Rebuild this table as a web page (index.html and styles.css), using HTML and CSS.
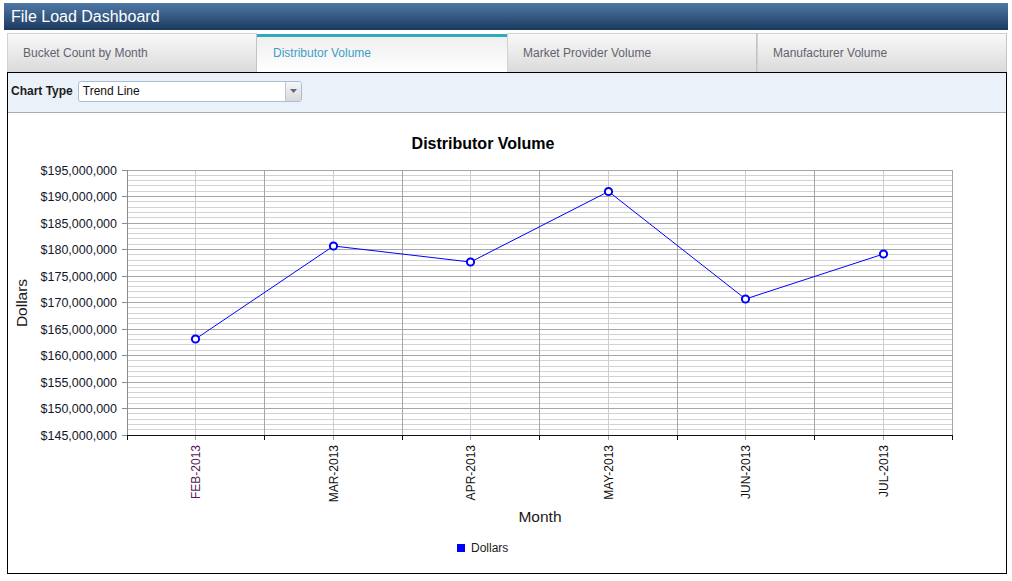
FILE: index.html
```html
<!DOCTYPE html>
<html>
<head>
<meta charset="utf-8">
<title>File Load Dashboard</title>
<link rel="stylesheet" href="styles.css">
</head>
<body>
<div class="header">File Load Dashboard</div>
<div class="main">
  <div class="tabs">
    <div class="tab">Bucket Count by Month</div>
    <div class="tab active">Distributor Volume</div>
    <div class="tab">Market Provider Volume</div>
    <div class="tab">Manufacturer Volume</div>
  </div>
  <div class="panel">
    <div class="toolbar">
      <span class="label">Chart Type</span>
      <div class="select">
        <span class="value">Trend Line</span>
        <span class="btn"><svg width="7" height="4" viewBox="0 0 7 4"><path d="M0 0H7L3.5 4Z" fill="#5b6b7d"/></svg></span>
      </div>
    </div>
    <div class="chart">
      <svg class="chart-svg" width="998" height="460" viewBox="8 113 998 460">
        <text class="title" x="483" y="149">Distributor Volume</text>
        <path class="minor" d="M127 175.5H952M127 180.5H952M127 185.5H952M127 191.5H952M127 201.5H952M127 207.5H952M127 212.5H952M127 217.5H952M127 228.5H952M127 233.5H952M127 238.5H952M127 244.5H952M127 254.5H952M127 260.5H952M127 265.5H952M127 270.5H952M127 281.5H952M127 286.5H952M127 291.5H952M127 297.5H952M127 307.5H952M127 313.5H952M127 318.5H952M127 323.5H952M127 334.5H952M127 339.5H952M127 344.5H952M127 350.5H952M127 360.5H952M127 366.5H952M127 371.5H952M127 376.5H952M127 387.5H952M127 392.5H952M127 397.5H952M127 403.5H952M127 413.5H952M127 419.5H952M127 424.5H952M127 429.5H952"/>
        <path class="vminor" d="M195.5 170V435M333.5 170V435M470.5 170V435M608.5 170V435M745.5 170V435M883.5 170V435"/>
        <path class="major" d="M127 170.5H952M127 196.5H952M127 223.5H952M127 249.5H952M127 276.5H952M127 302.5H952M127 329.5H952M127 355.5H952M127 382.5H952M127 408.5H952"/>
        <path class="major" d="M264.5 170V435M402.5 170V435M539.5 170V435M677.5 170V435M814.5 170V435M952.5 170V435"/>
        <path class="yaxis" d="M127.5 170V436M122 170.5H127M122 196.5H127M122 223.5H127M122 249.5H127M122 276.5H127M122 302.5H127M122 329.5H127M122 355.5H127M122 382.5H127M122 408.5H127M122 435.5H127"/>
        <path class="xticks-minor" d="M195.5 436V440M333.5 436V440M470.5 436V440M608.5 436V440M745.5 436V440M883.5 436V440"/>
        <path class="xaxis" d="M127 435.5H953M127.5 435V440M264.5 435V440M402.5 435V440M539.5 435V440M677.5 435V440M814.5 435V440M952.5 435V440"/>
        <g class="ylabels">
          <text x="117" y="174.5">$195,000,000</text>
          <text x="117" y="201">$190,000,000</text>
          <text x="117" y="227.5">$185,000,000</text>
          <text x="117" y="254">$180,000,000</text>
          <text x="117" y="280.5">$175,000,000</text>
          <text x="117" y="307">$170,000,000</text>
          <text x="117" y="333.5">$165,000,000</text>
          <text x="117" y="360">$160,000,000</text>
          <text x="117" y="386.5">$155,000,000</text>
          <text x="117" y="413">$150,000,000</text>
          <text x="117" y="439.5">$145,000,000</text>
        </g>
        <g class="xlabels">
          <text class="visited" transform="translate(200,445) rotate(-90)">FEB-2013</text>
          <text transform="translate(338,445) rotate(-90)">MAR-2013</text>
          <text transform="translate(475,445) rotate(-90)">APR-2013</text>
          <text transform="translate(613,445) rotate(-90)">MAY-2013</text>
          <text transform="translate(750,445) rotate(-90)">JUN-2013</text>
          <text transform="translate(888,445) rotate(-90)">JUL-2013</text>
        </g>
        <text class="axis-title" transform="translate(27,303) rotate(-90)">Dollars</text>
        <text class="axis-title" x="540" y="522">Month</text>
        <polyline class="series" points="195.5,339 333.5,246 470.5,262 608.5,191.5 745.5,299 883.5,254"/>
        <g class="markers">
          <circle cx="195.5" cy="339" r="3.6"/>
          <circle cx="333.5" cy="246" r="3.6"/>
          <circle cx="470.5" cy="262" r="3.6"/>
          <circle cx="608.5" cy="191.5" r="3.6"/>
          <circle cx="745.5" cy="299" r="3.6"/>
          <circle cx="883.5" cy="254" r="3.6"/>
        </g>
        <rect class="legend-key" x="457" y="544" width="8" height="8"/>
        <text class="legend-text" x="471" y="552">Dollars</text>
      </svg>
    </div>
  </div>
</div>
</body>
</html>
```

FILE: styles.css
```css
html, body {
  margin: 0;
  padding: 0;
  background: #ffffff;
  font-family: "Liberation Sans", Arial, sans-serif;
}

.header {
  margin: 3px 4px 0 4px;
  height: 27px;
  line-height: 27px;
  padding-left: 7px;
  background: linear-gradient(#5079a7, #1c395e);
  color: #ffffff;
  font-size: 16px;
}

.main {
  margin: 3px 0 0 7px;
  width: 1000px;
}

.tabs {
  display: flex;
  height: 39px;
}

.tab {
  box-sizing: border-box;
  width: 250px;
  height: 39px;
  display: flex;
  align-items: center;
  padding-left: 15px;
  padding-bottom: 1px;
  font-size: 12px;
  color: #63636f;
  background: linear-gradient(#f9f9f9, #dadada);
  border-top: 1px solid #d2d2d2;
  border-left: 1px solid #d2d2d2;
  border-right: 1px solid #c4c4c4;
}

.tab.active {
  margin-top: 1px;
  height: 38px;
  padding-bottom: 3px;
  padding-left: 16px;
  color: #3c9fc6;
  background: linear-gradient(#efefef, #ffffff);
  border-top: 3px solid #2eaabb;
  border-left: none;
  border-right: none;
}

.panel {
  border: 1px solid #000000;
}

.toolbar {
  box-sizing: border-box;
  height: 40px;
  padding: 0 0 3px 3px;
  display: flex;
  align-items: center;
  background: #ebf1f9;
  border-bottom: 1px solid #ababab;
}

.label {
  font-size: 12px;
  font-weight: bold;
  color: #1c1c1c;
  margin-right: 5px;
}

.select {
  box-sizing: border-box;
  width: 224px;
  height: 21px;
  display: flex;
  align-items: stretch;
  background: #ffffff;
  border: 1px solid #a9bdd6;
  border-radius: 3px;
}

.value {
  font-size: 12px;
  line-height: 19px;
  padding-left: 4px;
  color: #111111;
}

.btn {
  margin-left: auto;
  width: 15px;
  display: flex;
  align-items: center;
  justify-content: center;
  border-left: 1px solid #bcc8d8;
  background: linear-gradient(#f6f6f6, #d9d9d9);
  border-radius: 0 2px 2px 0;
}

.chart {
  height: 460px;
  background: #ffffff;
}

.chart-svg {
  display: block;
  font-family: "Liberation Sans", Arial, sans-serif;
}

.title {
  font-size: 16px;
  font-weight: bold;
  text-anchor: middle;
  fill: #000000;
}

.minor {
  stroke: #d2d2d2;
  stroke-width: 1;
  fill: none;
}

.vminor {
  stroke: #cdcdcd;
  stroke-width: 1;
  fill: none;
}

.major {
  stroke: #a6a6a6;
  stroke-width: 1;
  fill: none;
}

.yaxis {
  stroke: #8c8c8c;
  stroke-width: 1;
  fill: none;
}

.xticks-minor {
  stroke: #a0a0a0;
  stroke-width: 1;
  fill: none;
}

.xaxis {
  stroke: #111111;
  stroke-width: 1;
  fill: none;
}

.ylabels text {
  font-size: 12.5px;
  text-anchor: end;
  fill: #15152a;
}

.xlabels text {
  font-size: 12px;
  text-anchor: end;
  fill: #111111;
}

.xlabels text.visited {
  fill: #551a55;
}

.axis-title {
  font-size: 15.5px;
  text-anchor: middle;
  fill: #1a1a1a;
}

.series {
  fill: none;
  stroke: #0000ff;
  stroke-width: 1;
}

.markers circle {
  fill: #ffffff;
  stroke: #0000ff;
  stroke-width: 2;
}

.legend-key {
  fill: #0000ff;
}

.legend-text {
  font-size: 12px;
  fill: #1a1a1a;
}
```
